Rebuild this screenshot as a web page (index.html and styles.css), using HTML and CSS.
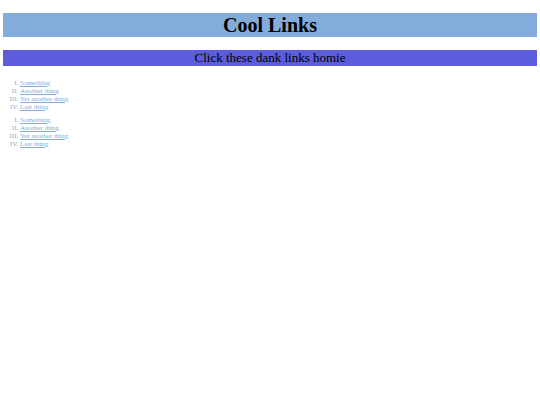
FILE: index.html
```html
<!DOCTYPE html>
<html lang="en">
<head>
<meta charset="utf-8">
<title>Cool Links</title>
<link rel="stylesheet" href="styles.css">
</head>
<body>
<h1 class="title">Cool Links</h1>
<p class="subtitle">Click these dank links homie</p>
<ol class="links">
<li><a href="#">Something</a></li>
<li><a href="#">Another thing</a></li>
<li><a href="#">Yet another thing</a></li>
<li><a href="#">Last thing</a></li>
</ol>
<ol class="links">
<li><a href="#">Something</a></li>
<li><a href="#">Another thing</a></li>
<li><a href="#">Yet another thing</a></li>
<li><a href="#">Last thing</a></li>
</ol>
</body>
</html>
```

FILE: styles.css
```css
body {
  margin: 13px 3px;
  font-family: "Liberation Serif", serif;
  font-size: 7px;
  color: #000;
  background: #fff;
}

.title {
  margin: 0 0 13px;
  font-size: 20px;
  line-height: 24px;
  text-align: center;
  background: #84acda;
}

.subtitle {
  margin: 0 0 13px;
  font-size: 13px;
  line-height: 16px;
  text-align: center;
  background: #5c5cdc;
}

.links {
  margin: 0 0 5px;
  padding-left: 17px;
  line-height: 8px;
  list-style: upper-roman;
  color: #84acda;
}

.links a {
  color: #84acda;
}
```
